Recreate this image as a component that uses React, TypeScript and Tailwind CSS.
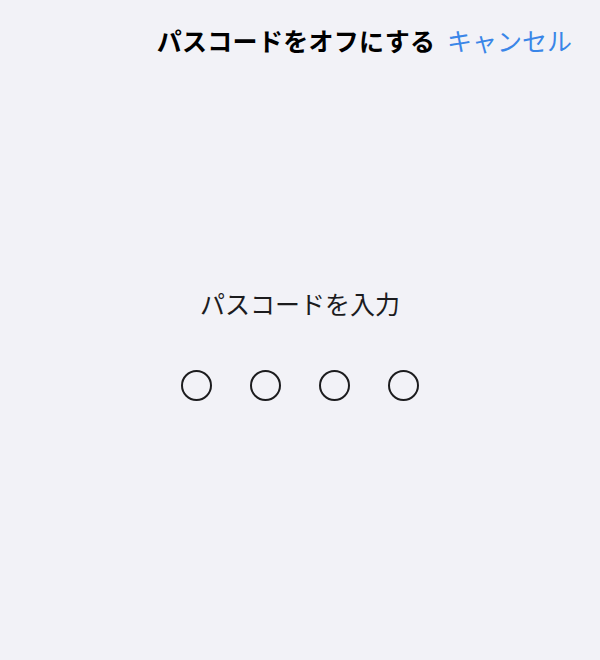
import React from "react";

export default function App() {
  const font = { fontFamily: '"Noto Sans CJK JP", "Noto Sans", sans-serif' };
  return (
    <div className="w-[600px] h-[660px] bg-[#f2f2f7] flex flex-col" style={font}>
      <div className="relative h-[82px] flex items-start justify-center pt-[22px] pr-[8px]">
        <div className="text-[25px] leading-[36px] font-bold text-black tracking-[0.3px]">パスコードをオフにする</div>
        <div className="absolute right-[28px] top-[22px] text-[25px] leading-[36px] text-[#3a86e8]">キャンセル</div>
      </div>
      <div className="flex flex-col items-center pt-[204px]">
        <div className="text-[25px] leading-[34px] text-[#1c1c1e]">パスコードを入力</div>
        <div className="flex gap-[38px] mt-[50px]">
          {[0, 1, 2, 3].map((i) => (
            <div key={i} className="w-[31px] h-[31px] rounded-full border-2 border-[#1c1c1e]" />
          ))}
        </div>
      </div>
    </div>
  );
}
